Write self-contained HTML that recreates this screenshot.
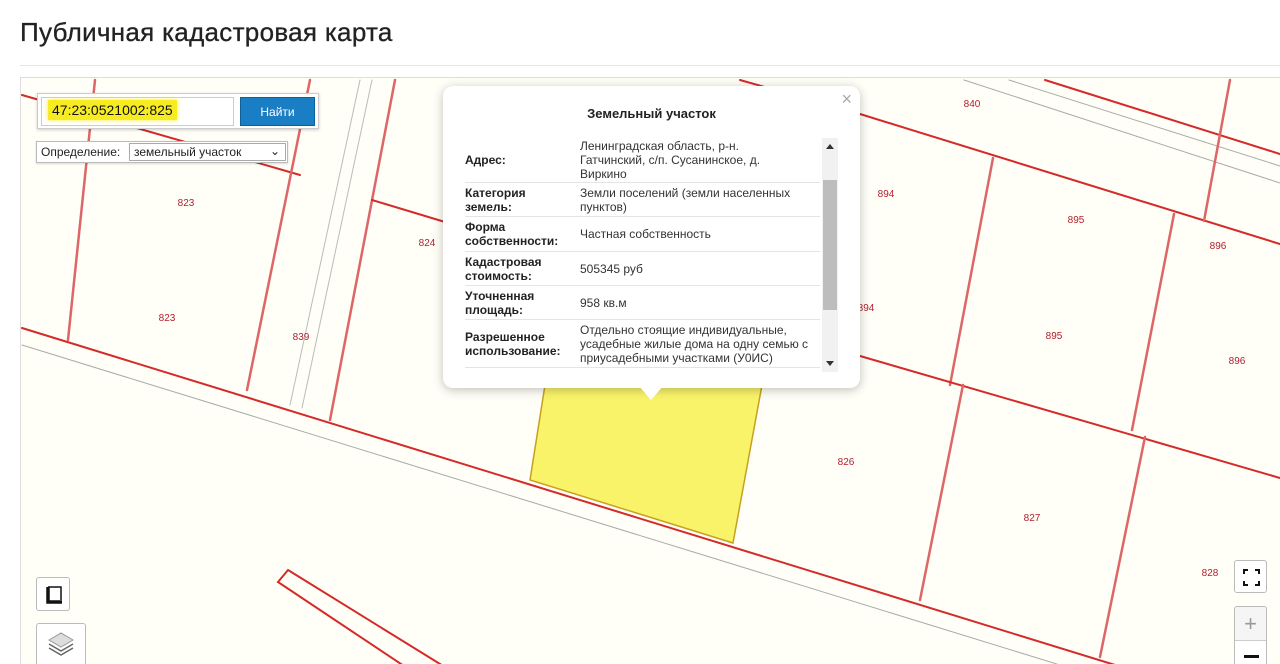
<!DOCTYPE html>
<html><head><meta charset="utf-8"><style>
*{margin:0;padding:0;box-sizing:border-box}
html,body{width:1280px;height:664px;overflow:hidden}
body{background:#fff;font-family:"Liberation Sans","Noto Sans CJK SC",sans-serif;position:relative}
h1{position:absolute;left:20px;top:17px;font-size:26px;font-weight:normal;color:#222;letter-spacing:0.3px;-webkit-text-stroke:0.3px #222}
.sep{position:absolute;left:20px;right:0;top:65px;height:1px;background:#e6e6e6}
.map{position:absolute;left:20px;top:77px;width:1260px;height:587px;background:#fffef7;border-left:1px solid #ddd;border-top:1px solid #ddd;overflow:hidden}
.map svg{position:absolute;left:-21px;top:-78px}
.srch{position:absolute;left:37px;top:93px;width:282px;height:36px;background:#fff;border:1px solid #ccc;box-shadow:0 1px 3px rgba(0,0,0,.2)}
.inp{position:absolute;left:3px;top:3px;width:193px;height:29px;border:1px solid #ccc;font-size:14px;padding:4px 6px;color:#111}
.inp span{background:#f7ec22;padding:2px 4px;box-shadow:0 0 4px #f7ec22}
.btn{position:absolute;left:202px;top:3px;width:75px;height:29px;background:#1a7ec4;color:#fff;font-size:12px;text-align:center;line-height:29px;border:1px solid #0f5f98}
.sel{position:absolute;left:36px;top:141px;width:252px;height:22px;background:#fff;border:1px solid #bbb;font-size:12px;color:#222;box-shadow:0 1px 2px rgba(0,0,0,.15)}
.sel .l{position:absolute;left:4px;top:3px}
.sel .b{position:absolute;left:92px;top:1px;width:157px;height:18px;border:1px solid #aaa;padding:1px 4px}
.pop{position:absolute;left:443px;top:86px;width:417px;height:302px;background:#fff;border-radius:10px;box-shadow:0 2px 10px rgba(0,0,0,.25)}
.pop .t{position:absolute;left:0;right:0;top:20px;text-align:center;font-size:13px;font-weight:bold;color:#222}
.pop .x{position:absolute;right:8px;top:3px;font-size:18px;color:#aaa}
.row{position:absolute;left:22px;width:355px;border-bottom:1px solid #e4e4e4;font-size:12px;color:#333;line-height:14px}
.row .k{position:absolute;left:0;top:50%;transform:translateY(-50%);width:108px;font-weight:bold;color:#222}
.row .v{position:absolute;left:115px;top:50%;transform:translateY(-50%);width:235px}
.sb{position:absolute;left:379px;top:52px;width:16px;height:234px;background:#f1f1f1}
.sb .th{position:absolute;left:1px;top:42px;width:14px;height:130px;background:#bdbdbd}
.tip{position:absolute;left:196px;top:300px;width:0;height:0;border-left:12px solid transparent;border-right:12px solid transparent;border-top:14px solid #fff}
.cbtn{position:absolute;background:#fff;border:1px solid #bbb;border-radius:3px;overflow:hidden}
</style></head><body>
<h1>Публичная кадастровая карта</h1>
<div class="sep"></div>
<div class="map">
<svg width="1280" height="664" viewBox="0 0 1280 664">
<g fill="none" stroke-linecap="round">
<polygon points="545,385 762,385 733,543 530,480" fill="#f9f36a" stroke="#c8a020" stroke-width="1.5"/>
<line x1="22" y1="328" x2="1300" y2="722" stroke="#d42a2a" stroke-width="2"/>
<line x1="22" y1="345" x2="1300" y2="739" stroke="#aaa" stroke-width="1"/>
<line x1="22" y1="95" x2="300" y2="175" stroke="#d42a2a" stroke-width="2"/>
<line x1="95" y1="80" x2="68" y2="340" stroke="#d66" stroke-width="2.5"/>
<line x1="310" y1="80" x2="247" y2="390" stroke="#d66" stroke-width="2.5"/>
<line x1="395" y1="80" x2="330" y2="420" stroke="#d66" stroke-width="2.5"/>
<line x1="360" y1="80" x2="290" y2="405" stroke="#bbb" stroke-width="1"/>
<line x1="372" y1="80" x2="302" y2="408" stroke="#bbb" stroke-width="1"/>
<line x1="372" y1="200" x2="445" y2="222" stroke="#d42a2a" stroke-width="2"/>
<line x1="860" y1="114" x2="1280" y2="244" stroke="#d42a2a" stroke-width="2"/>
<line x1="740" y1="80" x2="860" y2="114" stroke="#d42a2a" stroke-width="2"/>
<line x1="1045" y1="80" x2="1280" y2="154" stroke="#d42a2a" stroke-width="2"/>
<line x1="964" y1="80" x2="1280" y2="183" stroke="#aaa" stroke-width="1"/>
<line x1="1009" y1="80" x2="1280" y2="166" stroke="#aaa" stroke-width="1"/>
<line x1="1230" y1="80" x2="1204" y2="221" stroke="#d66" stroke-width="2.5"/>
<line x1="993" y1="158" x2="950" y2="385" stroke="#d66" stroke-width="2.5"/>
<line x1="1174" y1="214" x2="1132" y2="430" stroke="#d66" stroke-width="2.5"/>
<line x1="860" y1="356" x2="1280" y2="478" stroke="#d42a2a" stroke-width="2"/>
<line x1="963" y1="385" x2="920" y2="600" stroke="#d66" stroke-width="2.5"/>
<line x1="1145" y1="437" x2="1100" y2="657" stroke="#d66" stroke-width="2.5"/>
<polygon points="288,570 440,664 425,680 278,582" stroke="#d42a2a" stroke-width="2"/>
</g>
<g font-family="Liberation Sans,sans-serif" font-size="10" fill="#b02030" text-anchor="middle">
<text x="186" y="206">823</text><text x="167" y="321">823</text><text x="427" y="246">824</text><text x="301" y="340">839</text>
<text x="972" y="107">840</text><text x="886" y="197">894</text><text x="1076" y="223">895</text><text x="1218" y="249">896</text>
<text x="1054" y="339">895</text><text x="1237" y="364">896</text><text x="866" y="311">894</text>
<text x="846" y="465">826</text><text x="1032" y="521">827</text><text x="1210" y="576">828</text>
</g>
</svg>
</div>
<div class="srch"><div class="inp"><span>47:23:0521002:825</span></div><div class="btn">Найти</div></div>
<div class="sel"><span class="l">Определение:</span><div class="b">земельный участок<span style="position:absolute;right:5px;top:0">&#8964;</span></div></div>
<div class="pop">
<div class="x">×</div>
<div class="t">Земельный участок</div>
<div class="row" style="top:52px;height:45px"><div class="k">Адрес:</div><div class="v">Ленинградская область, р-н.<br>Гатчинский, с/п. Сусанинское, д.<br>Виркино</div></div>
<div class="row" style="top:97px;height:34px"><div class="k">Категория земель:</div><div class="v">Земли поселений (земли населенных пунктов)</div></div>
<div class="row" style="top:131px;height:35px"><div class="k">Форма собственности:</div><div class="v">Частная собственность</div></div>
<div class="row" style="top:166px;height:34px"><div class="k">Кадастровая стоимость:</div><div class="v">505345 руб</div></div>
<div class="row" style="top:200px;height:34px"><div class="k">Уточненная площадь:</div><div class="v">958 кв.м</div></div>
<div class="row" style="top:234px;height:48px"><div class="k">Разрешенное использование:</div><div class="v">Отдельно стоящие индивидуальные, усадебные жилые дома на одну семью с приусадебными участками (У0ИС)</div></div>
<div class="sb"><div style="position:absolute;left:4px;top:6px;border-left:4px solid transparent;border-right:4px solid transparent;border-bottom:5px solid #333"></div><div class="th"></div><div style="position:absolute;left:4px;bottom:6px;border-left:4px solid transparent;border-right:4px solid transparent;border-top:5px solid #333"></div></div>
<div class="tip"></div>
</div>
<div class="cbtn" style="left:36px;top:577px;width:34px;height:34px"><svg width="34" height="34" viewBox="0 0 34 34"><path d="M11 9 V24 H25 M11 9 H24 V22" fill="none" stroke="#111" stroke-width="1.5"/><path d="M11 9 V24 H25" fill="none" stroke="#111" stroke-width="3.5"/></svg></div>
<div class="cbtn" style="left:36px;top:623px;width:50px;height:41px;border-bottom:none;border-radius:3px 3px 0 0"><svg width="48" height="40" viewBox="0 0 48 40"><path d="M12 16 L24 9 L36 16 L24 23 Z" fill="#ddd" stroke="#999"/><path d="M12 20 L24 27 L36 20 M12 24 L24 31 L36 24" fill="none" stroke="#666" stroke-width="1.5"/></svg></div>
<div class="cbtn" style="left:1234px;top:560px;width:33px;height:33px"><svg width="33" height="33" viewBox="0 0 33 33"><path d="M9 13V9h4 M20 9h4v4 M24 20v4h-4 M13 24H9v-4" fill="none" stroke="#111" stroke-width="2"/></svg></div>
<div class="cbtn" style="left:1234px;top:606px;width:33px;height:58px;background:#f5f5f5;border-bottom:none;border-radius:3px 3px 0 0"><div style="position:absolute;top:0;left:0;right:0;height:33px;text-align:center;font-size:22px;color:#999;line-height:33px">+</div><div style="position:absolute;top:33px;left:0;right:0;border-top:1px solid #ccc;height:25px;background:#fff"><div style="position:absolute;left:9px;top:14px;width:15px;height:3px;background:#111"></div></div></div>
</body></html>
